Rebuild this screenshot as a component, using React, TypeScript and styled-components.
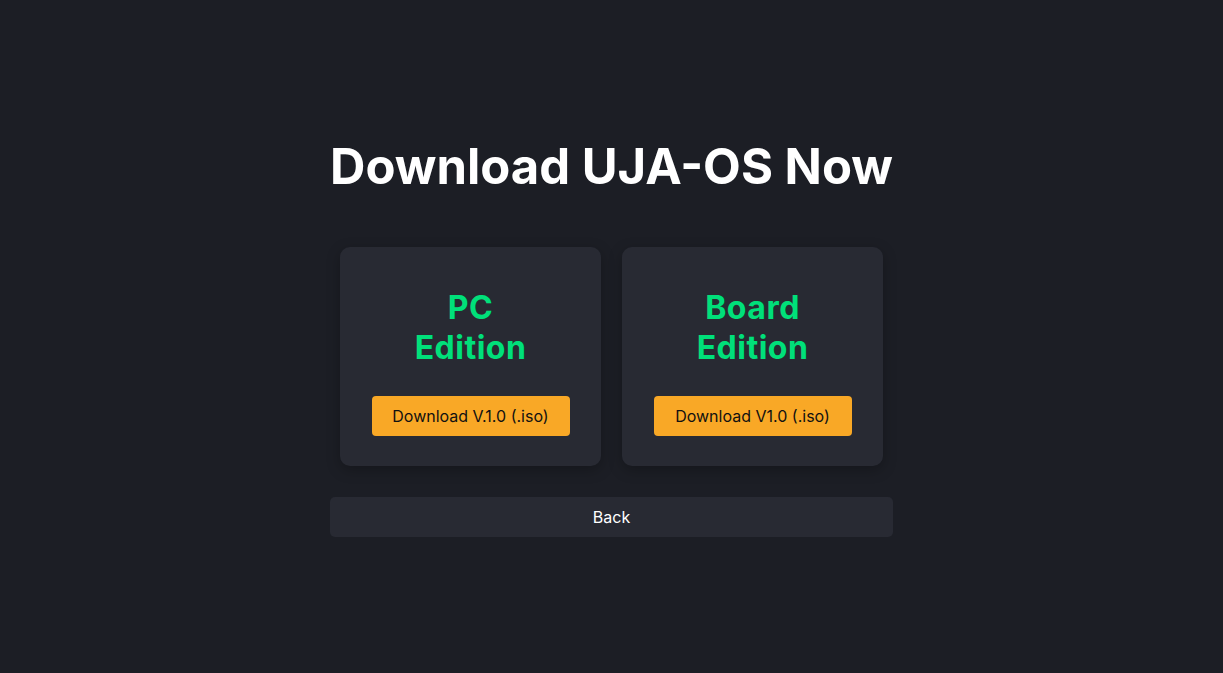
import React from "react";
import styled, { createGlobalStyle } from "styled-components";

const Global = createGlobalStyle`
  html, body { margin: 0; padding: 0; background: #1c1e25; }
  body { font-family: Inter, "Noto Sans", sans-serif; color: #ffffff; }
`;

const Page = styled.main`
  min-height: 673px;
  display: flex;
  flex-direction: column;
  align-items: center;
  justify-content: center;
  box-sizing: border-box;
`;

const Title = styled.h1`
  margin: 0 0 51px;
  padding-top: 2px;
  font-size: 49px;
  line-height: 58px;
  font-weight: 700;
  color: #ffffff;
`;

const Grid = styled.div`
  display: flex;
  gap: 21px;
  margin-bottom: 31px;
`;

const Card = styled.section`
  width: 261px;
  height: 219px;
  box-sizing: border-box;
  background: #282a33;
  border-radius: 10px;
  box-shadow: 0 4px 14px rgba(0, 0, 0, 0.25);
  display: flex;
  flex-direction: column;
  align-items: center;
  padding: 41px 30px 30px;
`;

const CardTitle = styled.h2`
  margin: 0 0 auto;
  font-size: 32px;
  line-height: 40px;
  font-weight: 700;
  color: #00e07a;
  text-align: center;
  width: 150px;
  letter-spacing: 0.5px;
`;

const DownloadButton = styled.button`
  width: 198px;
  height: 40px;
  border: none;
  border-radius: 4px;
  background: #f9a826;
  color: #111111;
  font-family: inherit;
  font-size: 16px;
  cursor: pointer;
`;

const BackButton = styled.button`
  width: 563px;
  height: 40px;
  border: none;
  border-radius: 5px;
  background: #282a33;
  color: #ffffff;
  font-family: inherit;
  font-size: 16px;
  cursor: pointer;
`;

const editions = [
  { name: "PC Edition", label: "Download V.1.0 (.iso)" },
  { name: "Board Edition", label: "Download V1.0 (.iso)" },
];

export default function App() {
  return (
    <>
      <Global />
      <Page>
        <Title>Download UJA-OS Now</Title>
        <Grid>
          {editions.map((e) => (
            <Card key={e.name}>
              <CardTitle>{e.name}</CardTitle>
              <DownloadButton>{e.label}</DownloadButton>
            </Card>
          ))}
        </Grid>
        <BackButton>Back</BackButton>
      </Page>
    </>
  );
}
